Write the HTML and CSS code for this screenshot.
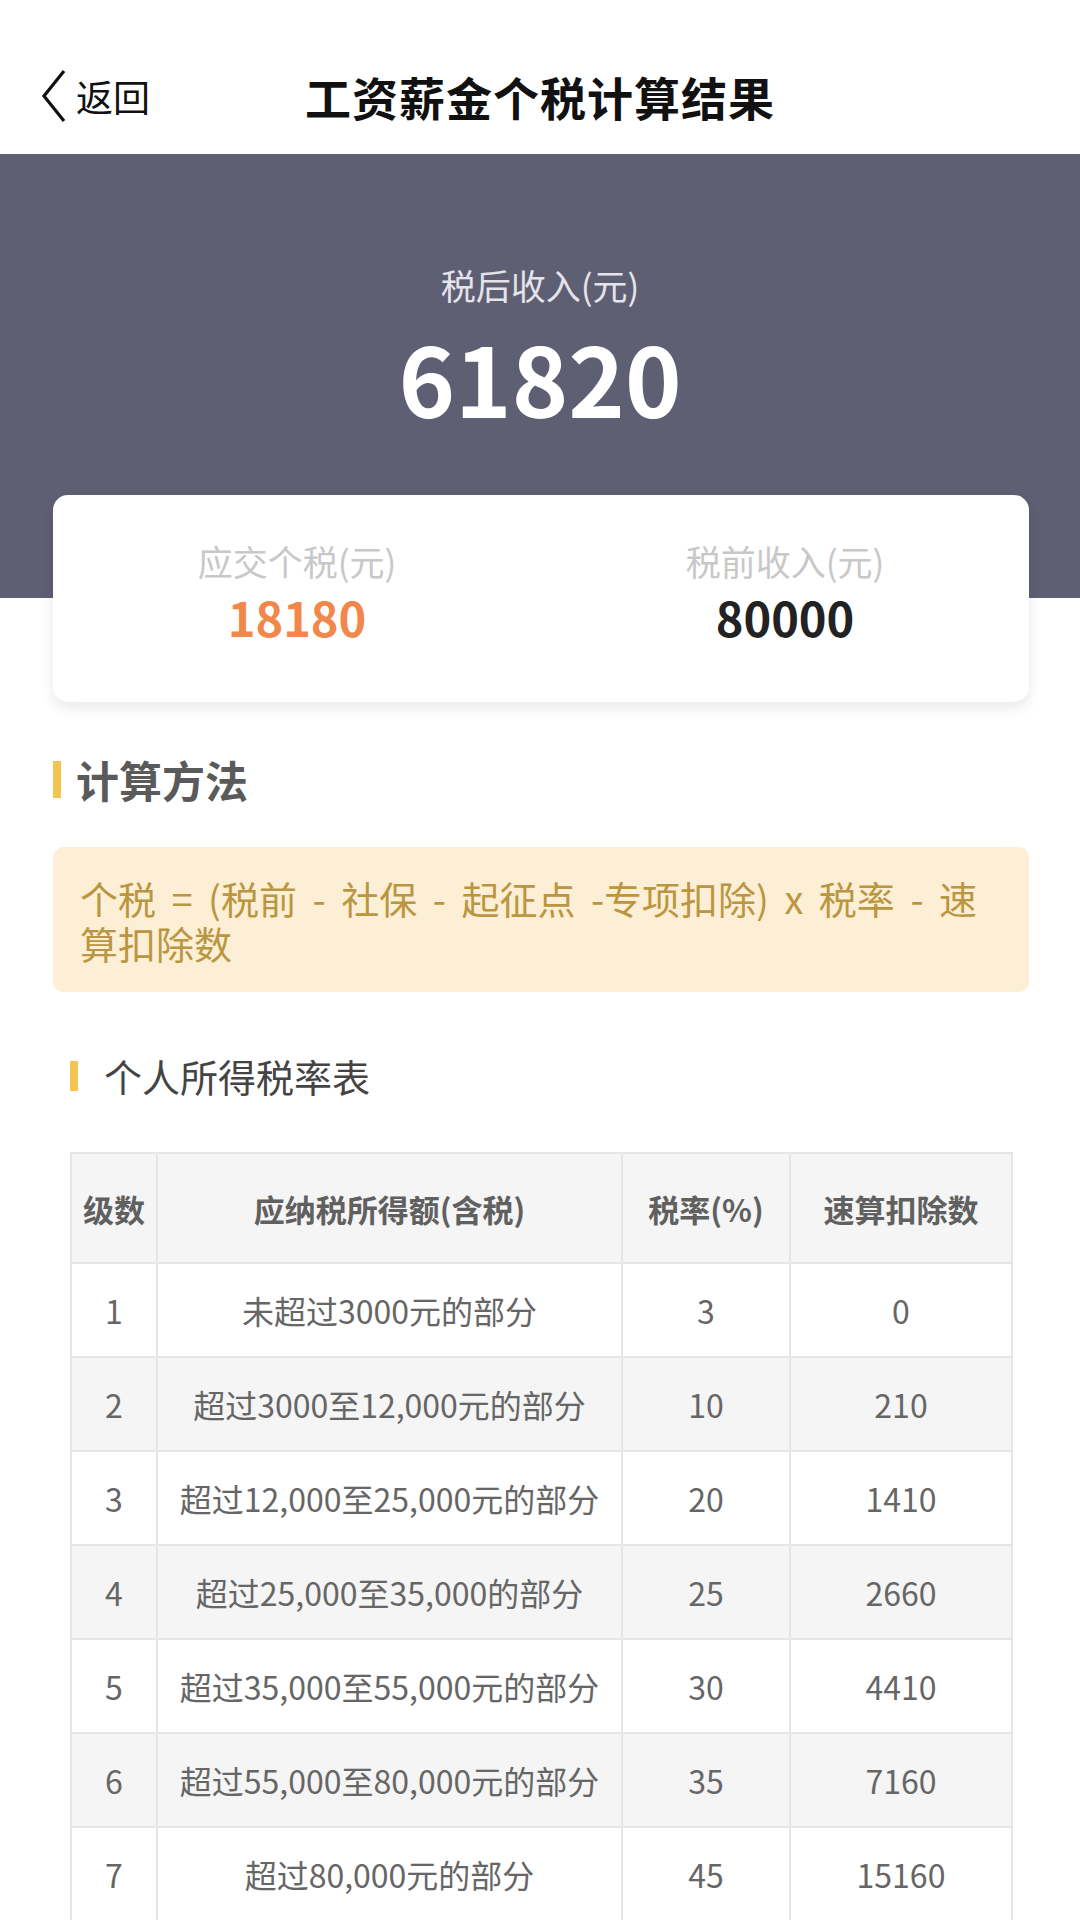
FILE: index.html
```html
<!DOCTYPE html>
<html lang="zh-CN">

<head>
    <meta charset="UTF-8">
    <meta name="viewport" content="width=device-width, initial-scale=1.0">
    <title>工资薪金个税计算结果</title>
    <link rel="stylesheet" href="styles.css">
</head>

<body>
    <div class="nav">
        <div class="back">
            <svg class="chevron" width="28" height="54" viewBox="0 0 28 54">
                <polyline points="24,2 4,27 24,52" fill="none" stroke="#111" stroke-width="3.2" />
            </svg>
            <span>返回</span>
        </div>
        <div class="title">工资薪金个税计算结果</div>
        <div></div>
    </div>

    <div class="hero">
        <div class="hero-label">税后收入(元)</div>
        <div class="hero-value">61820</div>
    </div>

    <div class="card">
        <div class="card-item">
            <div class="card-label">应交个税(元)</div>
            <div class="card-value tax">18180</div>
        </div>
        <div class="card-item">
            <div class="card-label">税前收入(元)</div>
            <div class="card-value">80000</div>
        </div>
    </div>

    <div class="section-title">计算方法</div>
    <div class="formula">个税 = (税前 - 社保 - 起征点 -专项扣除) x 税率 - 速算扣除数</div>

    <div class="section-title small">个人所得税率表</div>
    <table class="rates">
        <colgroup>
            <col class="c1">
            <col class="c2">
            <col class="c3">
            <col class="c4">
        </colgroup>
        <thead>
            <tr>
                <th>级数</th>
                <th>应纳税所得额(含税)</th>
                <th>税率(%)</th>
                <th>速算扣除数</th>
            </tr>
        </thead>
        <tbody>
            <tr><td>1</td><td>未超过3000元的部分</td><td>3</td><td>0</td></tr>
            <tr><td>2</td><td>超过3000至12,000元的部分</td><td>10</td><td>210</td></tr>
            <tr><td>3</td><td>超过12,000至25,000元的部分</td><td>20</td><td>1410</td></tr>
            <tr><td>4</td><td>超过25,000至35,000的部分</td><td>25</td><td>2660</td></tr>
            <tr><td>5</td><td>超过35,000至55,000元的部分</td><td>30</td><td>4410</td></tr>
            <tr><td>6</td><td>超过55,000至80,000元的部分</td><td>35</td><td>7160</td></tr>
            <tr><td>7</td><td>超过80,000元的部分</td><td>45</td><td>15160</td></tr>
        </tbody>
    </table>
</body>

</html>
```

FILE: styles.css
```css
* {
    box-sizing: border-box;
    margin: 0;
    padding: 0;
}

body {
    font-family: "Noto Sans CJK SC", "Noto Sans", sans-serif;
    background: #fff;
    color: #333;
    width: 1080px;
    height: 1920px;
    overflow: hidden;
}

.nav {
    height: 154px;
    padding: 38px 0 0 0;
    display: grid;
    grid-template-columns: 1fr auto 1fr;
    align-items: center;
}

.back {
    display: flex;
    align-items: center;
    padding-left: 40px;
    font-size: 37px;
    color: #111;
}

.back .chevron {
    margin-right: 8px;
}

.title {
    font-size: 46px;
    font-weight: 700;
    color: #111;
    letter-spacing: 1px;
}

.hero {
    height: 444px;
    background: #5f5f74;
    padding-top: 106px;
    text-align: center;
}

.hero-label {
    font-size: 35px;
    line-height: 50px;
    color: #e4e4ea;
}

.hero-value {
    font-size: 96px;
    line-height: 110px;
    font-weight: 700;
    color: #fff;
    margin-top: 12px;
}

.card {
    margin: -103px 51px 0 53px;
    height: 207px;
    background: #fff;
    border-radius: 15px;
    box-shadow: 0 6px 14px rgba(0, 0, 0, 0.09);
    display: grid;
    grid-template-columns: 1fr 1fr;
    padding-top: 42px;
    text-align: center;
}

.card-label {
    font-size: 35px;
    line-height: 48px;
    color: #c8c8c8;
}

.card-value {
    font-size: 47px;
    line-height: 60px;
    font-weight: 700;
    color: #222;
    margin-top: 2px;
}

.card-value.tax {
    color: #f2874b;
}

.section-title {
    display: flex;
    align-items: center;
    margin: 49px 0 0 53px;
    font-size: 43px;
    line-height: 56px;
    font-weight: 700;
    color: #5a5a5a;
}

.section-title::before {
    content: "";
    width: 8px;
    height: 37px;
    background: #f1c550;
    margin-right: 15px;
}

.section-title.small {
    margin: 59px 0 0 70px;
    font-size: 38px;
    line-height: 50px;
    font-weight: 400;
    color: #444;
}

.section-title.small::before {
    height: 30px;
    margin-right: 26px;
}

.formula {
    margin: 40px 51px 0 53px;
    padding: 28px 27px 27px 27px;
    background: #fcefd6;
    border-radius: 10px;
    font-size: 38px;
    line-height: 45px;
    word-spacing: 7px;
    color: #bb9640;
}

.rates {
    margin: 51px 0 0 70px;
    width: 941px;
    border-collapse: collapse;
    table-layout: fixed;
    text-align: center;
    font-size: 32px;
    color: #666;
}

.rates .c1 { width: 86px; }
.rates .c2 { width: 465px; }
.rates .c3 { width: 168px; }
.rates .c4 { width: 222px; }

.rates th,
.rates td {
    border: 2px solid #e6e6e6;
    white-space: nowrap;
    padding: 0;
}

.rates th {
    height: 110px;
    background: #f5f5f5;
    font-weight: 700;
    color: #606060;
    font-size: 31px;
}

.rates td {
    height: 94px;
}

.rates tbody tr:nth-child(even) {
    background: #f5f5f5;
}
```
